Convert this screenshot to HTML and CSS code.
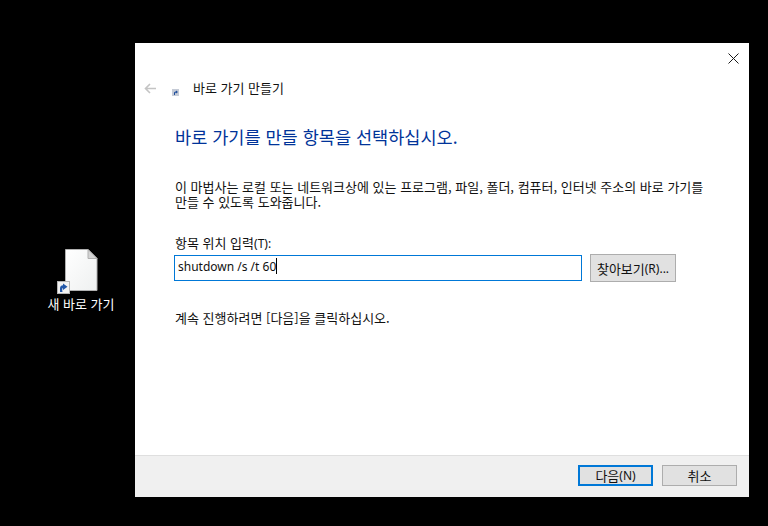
FILE: index.html
```html
<!DOCTYPE html>
<html lang="ko">
<head>
<meta charset="utf-8">
<title>바로 가기 만들기</title>
<link rel="stylesheet" href="styles.css">
</head>
<body>
<div class="desktop">
  <div class="shortcut">
    <div class="shortcut-icon">
      <svg class="file" width="33" height="43" viewBox="0 0 33 43">
        <defs><linearGradient id="page" x1="0" y1="0" x2="1" y2="1"><stop offset="0" stop-color="#ffffff"/><stop offset="1" stop-color="#eef0f0"/></linearGradient></defs>
        <path d="M.5.500H23L32 9.500V41.500H.5Z" fill="url(#page)" stroke="#b0b0b0"/>
        <path d="M23 .5V9.500H32Z" fill="#d4d4d4" stroke="#b0b0b0"/>
      </svg>
      <svg class="arrow" width="13" height="13" viewBox="0 0 13 13">
        <rect x=".5" y=".5" width="12" height="12" fill="#f2f2f2" stroke="#b4b4b4"/>
        <path d="M3 11V7.500C3 5.500 4.300 4.300 6 4.300V2.500L10.500 5.800 6 9V7C5.200 7 5 8.200 5.500 11Z" fill="#2257a8"/>
      </svg>
    </div>
    <div class="shortcut-label">새 바로 가기</div>
  </div>

  <div class="wizard">
    <div class="titlebar">
      <svg class="close" width="11" height="11" viewBox="0 0 11 11"><path d="M.5.5L10.500 10.500M10.500.5L.5 10.500" stroke="#1a1a1a" fill="none"/></svg>
    </div>
    <div class="navbar">
      <svg class="back" width="12" height="11" viewBox="0 0 12 11"><path d="M12 5.500H1.500M6 1L1.500 5.500 6 10" stroke="#c4c4c4" stroke-width="1.600" fill="none"/></svg>
      <svg class="nav-icon" width="7" height="7" viewBox="0 0 7 7"><rect width="7" height="7" fill="#c5cbd6"/><path d="M2 6V4C2 3 3 2.500 4 2.500V1.500L6 3 4 4.500V3.500C3 3.500 3 4.500 3 6Z" fill="#1f4e9c"/></svg>
      <span class="nav-title">바로 가기 만들기</span>
    </div>
    <div class="content">
      <h1 class="heading">바로 가기를 만들 항목을 선택하십시오.</h1>
      <p class="intro">이 마법사는 로컬 또는 네트워크상에 있는 프로그램, 파일, 폴더, 컴퓨터, 인터넷 주소의 바로 가기를<br>만들 수 있도록 도와줍니다.</p>
      <label class="field-label">항목 위치 입력<span class="latin">(T):</span></label>
      <div class="field-row">
        <div class="input"><span>shutdown /s /t 60</span><i class="caret"></i></div>
        <div class="btn browse">찾아보기<span class="latin">(R)...</span></div>
      </div>
      <p class="hint">계속 진행하려면 [다음]을 클릭하십시오.</p>
    </div>
    <div class="footer">
      <div class="btn action primary">다음<span class="latin">(N)</span></div>
      <div class="btn action">취소</div>
    </div>
  </div>
</div>
</body>
</html>
```
FILE: styles.css
```css
* { box-sizing: border-box; }
html, body { margin: 0; padding: 0; background: #000; }
body {
  width: 768px;
  height: 526px;
  overflow: hidden;
  font-family: "Noto Sans CJK KR", "Noto Sans", sans-serif;
  font-size: 13px;
  color: #111;
}
.desktop { position: relative; width: 768px; height: 526px; background: #000; }
.latin { font-family: "Noto Sans", sans-serif; font-size: 12px; }

.shortcut { position: absolute; left: 42px; top: 248px; width: 78px; display: flex; flex-direction: column; align-items: center; }
.shortcut-icon { position: relative; width: 78px; height: 47px; }
.file { position: absolute; left: 23px; top: 1px; }
.arrow { position: absolute; left: 15px; top: 33px; }
.shortcut-label { color: #fff; line-height: 16px; margin-top: 1px; }

.wizard { position: absolute; left: 135px; top: 43px; width: 614px; height: 454px; background: #fff; display: flex; flex-direction: column; }
.titlebar { height: 30px; display: flex; justify-content: flex-end; align-items: flex-start; padding: 10px 10px 0 0; }
.navbar { height: 30px; display: flex; align-items: center; padding-left: 9px; }
.back { flex: none; }
.nav-icon { flex: none; margin: 9px 0 0 16px; }
.nav-title { margin-left: 14px; line-height: 16px; }

.content { flex: 1; padding: 23px 0 0 40px; }
.heading { margin: 0; font-size: 17.55px; font-weight: 400; line-height: 22px; color: #003399; }
.intro { margin: 31px 0 0; line-height: 15px; }
.field-label { display: block; margin-top: 26px; line-height: 16px; }
.field-row { display: flex; align-items: flex-start; margin: 2px 0 0 -1px; }
.input { width: 408px; height: 26px; margin-top: 1px; border: 1px solid #0078d7; display: flex; align-items: center; padding: 0 0 4px 3px; font-family: "Noto Sans", sans-serif; font-size: 12px; }
.caret { display: block; width: 1px; height: 16px; background: #000; }
.btn { display: flex; align-items: center; justify-content: center; background: #e1e1e1; border: 1px solid #adadad; }
.browse { width: 86px; height: 28px; margin-left: 8px; }
.hint { margin: 28px 0 0; line-height: 16px; }

.footer { height: 42px; background: #f0f0f0; border-top: 1px solid #dfdfdf; display: flex; justify-content: flex-end; gap: 9px; padding: 9px 12px 0 0; }
.action { width: 75px; height: 21px; }
.primary { border: 2px solid #0078d7; }
```
